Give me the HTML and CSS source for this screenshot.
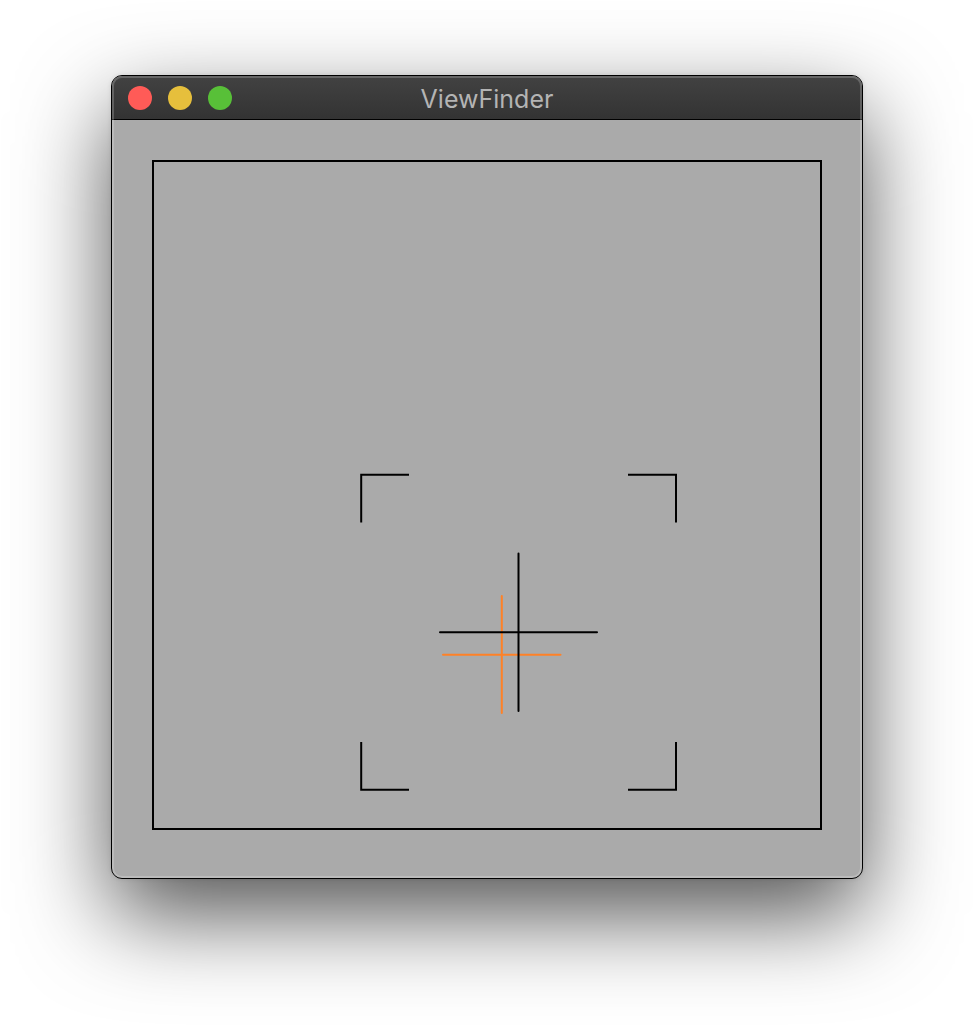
FILE: index.html
```html
<!DOCTYPE html>
<html lang="en">
<head>
<meta charset="utf-8">
<title>ViewFinder</title>
<link rel="stylesheet" href="styles.css">
</head>
<body>
<main class="window">
  <header class="titlebar">
    <div class="controls">
      <button class="control close" type="button" aria-label="Close"></button>
      <button class="control minimize" type="button" aria-label="Minimize"></button>
      <button class="control zoom" type="button" aria-label="Zoom"></button>
    </div>
    <h1 class="title">ViewFinder</h1>
  </header>
  <section class="content">
    <svg class="finder" viewBox="0 0 670 670" fill="none" stroke="#000" stroke-width="2" role="img" aria-label="Viewfinder">
      <rect x="1" y="1" width="668" height="668"/>
      <path d="M209.2 362.5V314.8H257M476 314.8H524V362.5M209.2 582V629.7H257M476 629.7H524V582"/>
      <path class="offset-cross" stroke-linecap="round" d="M349.8 436V553M291 494.8H408.5"/>
      <path stroke-linecap="round" d="M366.5 393.5V551M288 472.2H445"/>
    </svg>
  </section>
</main>
</body>
</html>
```
FILE: styles.css
```css
* {
  box-sizing: border-box;
}

body {
  margin: 0;
  padding: 75px 111px 147px;
  background: #fff;
  font-family: Inter, "Liberation Sans", sans-serif;
}

.window {
  position: relative;
  border: 1px solid #000;
  border-radius: 11px;
  background: #aaa;
  box-shadow: 0 36px 92px rgba(0, 0, 0, 0.68), 0 0 4px rgba(0, 0, 0, 0.1);
}

/* Light inner rim over the title bar and the content */
.window::after {
  content: "";
  position: absolute;
  inset: 0;
  border: 2px solid rgba(255, 255, 255, 0.2);
  border-radius: 10px;
  pointer-events: none;
}

.titlebar {
  display: grid;
  grid-template-columns: 1fr auto 1fr;
  align-items: center;
  height: 44px;
  padding: 0 16px;
  border-bottom: 1px solid #000;
  border-radius: 10px 10px 0 0;
  background: linear-gradient(#424242, #333);
}

.controls {
  display: flex;
  gap: 16px;
}

.control {
  width: 24px;
  height: 24px;
  padding: 0;
  border: 0;
  border-radius: 50%;
}

.close {
  background: #ff5b57;
}

.minimize {
  background: #e6bf3c;
}

.zoom {
  background: #58c038;
}

.title {
  margin: 0;
  padding-top: 2px;
  color: #b4b4b4;
  font-size: 25px;
  font-weight: 400;
  line-height: 32px;
}

.content {
  padding: 40px 40px 48px;
}

.finder {
  display: block;
  width: 100%;
}

.offset-cross {
  stroke: #ff8126;
}
```
